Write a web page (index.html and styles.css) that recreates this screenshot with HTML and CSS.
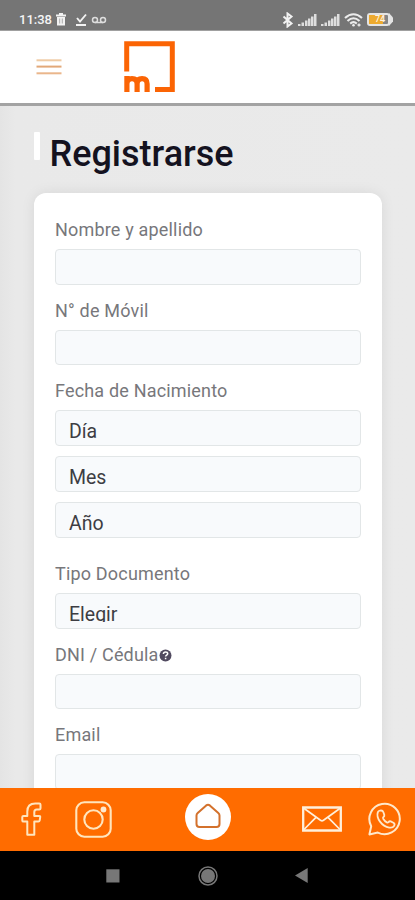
FILE: index.html
```html
<!DOCTYPE html>
<html lang="es">
<head>
<meta charset="utf-8">
<title>Registrarse</title>
<link rel="stylesheet" href="styles.css">
</head>
<body>
<div class="status">
  <span class="time">11:38</span>
  <svg class="trash" width="12" height="14" viewBox="0 0 12 14"><path d="M1 2.500h10M4 1h4" stroke="#f2f2f2" stroke-width="2"/><path d="M2 4h8v8.500h-8z" fill="#f2f2f2"/><path d="M4.700 5.500v5M7.300 5.500v5" stroke="#999" stroke-width=".8"/></svg>
  <svg class="done" width="12" height="14" viewBox="0 0 12 14" fill="none" stroke="#f2f2f2" stroke-width="1.900"><path d="M2 5l3 3.500L11 1.500M1 12h10"/></svg>
  <svg class="voice" width="16" height="8" viewBox="0 0 16 8" fill="none" stroke="#dedede" stroke-width="1.500"><circle cx="4" cy="4" r="2.500"/><circle cx="12" cy="4" r="2.500"/><path d="M4 6.500h8"/></svg>
  <span class="spacer"></span>
  <svg class="bluetooth" width="12" height="16" viewBox="0 0 12 16" fill="none" stroke="#f2f2f2" stroke-width="2"><path d="M1.500 4.500l8 7-4 3V1.500l4 3-8 7"/></svg>
  <svg class="signal" width="19" height="14" viewBox="0 0 19 14" fill="#dedede"><path d="M0 11h2.500v2H0zM3.500 9.500H6V13H3.500zM7 7.500h2.500V13H7zM10 5.500h2.500V13H10zM13 3.500h2.500V13H13zM16 1h2.500v12H16z"/></svg>
  <svg class="signal" width="19" height="14" viewBox="0 0 19 14" fill="#dedede"><path d="M0 11h2.500v2H0zM3.500 9.500H6V13H3.500zM7 7.500h2.500V13H7zM10 5.500h2.500V13H10zM13 3.500h2.500V13H13zM16 1h2.500v12H16z"/></svg>
  <svg class="wifi" width="19" height="16" viewBox="0 0 19 16" fill="none" stroke="#ececec" stroke-width="2.100"><path d="M1 6q8.500-7.500 17 0M3.500 9q6-5.500 12 0M6.200 11.600q3.300-2.800 6.600 0"/><circle cx="9.500" cy="13.300" r="1.300" fill="#ececec" stroke="none"/><path d="M13.500 13h3M15 11.500v3" stroke-width="1.300"/></svg>
  <span class="battery"><span class="charge"></span><span class="level">74</span><svg class="tip" width="4" height="13" viewBox="0 0 4 13"><path d="M0 0l4 4.500v4L0 13z" fill="#e4e4e4"/></svg></span>
</div>
<header class="header">
  <svg class="menu" width="26" height="18" viewBox="0 0 26 18" stroke-width="2"><path d="M.5 2.300h25" stroke="#efcba4"/><path d="M.5 8.600h25" stroke="#e2a878"/><path d="M.5 15.300h25" stroke="#eab68b"/></svg>
  <svg class="logo" width="52" height="52" viewBox="0 0 52 52" fill="none" stroke="#fb6404" stroke-width="5"><path d="M2.700 30.500V2.700h45.600v45.800H31"/><path d="M2.900 51V35M2.900 51v-8q0-5.300 5.100-5.300t5.100 5.300v8M13.100 51v-8q0-5.300 5-5.300t5 5.300v8" stroke-width="5.200"/></svg>
</header>
<main class="content">
  <div class="heading"><span class="marker"></span><h1>Registrarse</h1></div>
  <form class="card">
    <div class="field"><label>Nombre y apellido</label><div class="input"></div></div>
    <div class="field"><label>N° de Móvil</label><div class="input"></div></div>
    <div class="field dates"><label>Fecha de Nacimiento</label><div class="input"><span>Día</span></div><div class="input"><span>Mes</span></div><div class="input"><span>Año</span></div></div>
    <div class="field"><label>Tipo Documento</label><div class="input"><span class="cut">Elegir</span></div></div>
    <div class="field"><label>DNI / Cédula<svg class="help" width="13" height="13" viewBox="0 0 13 13"><circle cx="6.500" cy="6.500" r="6" fill="#514a60"/><path d="M4.400 5q.1-2 2.200-2 2.100 0 2.100 1.700c0 1.500-2.100 1.300-2.100 2.900M6.600 8.700v1.600" fill="none" stroke="#fff" stroke-width="1.500"/></svg></label><div class="input"></div></div>
    <div class="field"><label>Email</label><div class="input"></div></div>
  </form>
</main>
<footer class="tabs">
  <svg class="facebook" width="21" height="35" viewBox="0 0 21 35" fill="none" stroke="#ffe5bd" stroke-width="2" stroke-linejoin="round"><path d="M6.300 32.800V19.600H2.500q-1.200 0-1.200-1.200v-3.300q0-1.200 1.200-1.200h3.800V9.500q0-8 8-8h4q1.200 0 1.200 1.200v3.600q0 1.200-1.200 1.200h-2.500q-2.500 0-2.500 2.500v3.900h4.800q1.300 0 1.100 1.300l-.5 3.200q-.2 1.200-1.400 1.200h-4v13.200z"/></svg>
  <svg class="instagram" width="37" height="37" viewBox="0 0 37 37" fill="none" stroke="#ffe5bd" stroke-width="2.100"><rect x="1.300" y="1.300" width="34.400" height="34.400" rx="8"/><circle cx="18.500" cy="18.500" r="9.200"/><circle cx="28.500" cy="8.500" r="2.900" fill="#ffe9cc" stroke="none"/></svg>
  <span class="home"><svg width="26" height="26" viewBox="0 0 26 26" fill="none" stroke="#d3712c" stroke-width="2" stroke-linejoin="round"><path d="M1.500 12.500q0-1.500 1.200-2.600l8.500-7.500Q13 1 14.800 2.400l8.500 7.500q1.200 1.100 1.200 2.600v8.500q0 3-3 3h-17q-3 0-3-3z"/></svg></span>
  <svg class="mail" width="40" height="26" viewBox="0 0 40 26" fill="none" stroke="#fff0db" stroke-width="2.300"><path d="M1.200 1.500h37.600v23H1.200z"/><path d="M1.500 2l17 12.300q1.500 1 3 0L38.500 2M1.500 24L14 11.300M38.500 24L26 11.300" stroke-width="1.700"/></svg>
  <svg class="whatsapp" width="34" height="34" viewBox="0 0 34 34" fill="none" stroke="#ffe8ca" stroke-width="2" stroke-linejoin="round"><path d="M1.400 32.400l1.800-8.200A15.200 15.200 0 1 1 9.800 30.600z"/><path d="M9.800 10.200q.7-1.300 2-1.500 2.800-.7 3.600 1.600l.9 2.600q.3 1.200-.8 2.100-.8.800-.3 1.700 1.500 2.500 3.700 3.700.9.500 1.600-.3 1-1.200 2.200-.7l2.700 1.300q1.800 1 .8 3-1.400 2.500-5 1.900-5.500-1-9.200-6-3.600-5-2.200-9.400z" stroke-width="1.800"/></svg>
</footer>
<nav class="system">
  <svg class="recent" width="14" height="14" viewBox="0 0 14 14"><path d="M.3.300h13.200v13.200H.3z" fill="#777"/></svg>
  <svg class="circle" width="20" height="20" viewBox="0 0 20 20"><circle cx="10" cy="10" r="9" fill="none" stroke="#777" stroke-width="1.500"/><circle cx="10" cy="10" r="7" fill="#777"/></svg>
  <svg class="back" width="13" height="15" viewBox="0 0 13 15"><path d="M0 7.500L12.700 0v15z" fill="#777"/></svg>
</nav>
</body>
</html>
```
FILE: styles.css
```css
* { box-sizing: border-box; }
body { margin: 0; width: 415px; height: 900px; overflow: hidden; display: flex; flex-direction: column; font-family: Roboto, sans-serif; background: #e9e9e9; }
svg { display: block; flex: none; }
.status { flex: none; height: 31px; padding: 9px 20px 0 19px; display: flex; align-items: center; background: #757575; border-bottom: 1px solid #a0a0a0; color: #f5f5f5; }
.time { width: 33px; font-size: 13px; font-weight: 500; line-height: 20px; white-space: nowrap; }
.trash { margin-left: 3px; }
.done { margin-left: 8px; }
.voice { margin-left: 4px; }
.spacer { flex: 1; }
.bluetooth { margin-right: 4px; }
.signal { margin-right: 4px; }
.wifi { margin-right: 4px; }
.battery { position: relative; width: 23px; height: 13px; margin-right: 5px; border: 2px solid #e4e4e4; border-radius: 3px; display: flex; background: #858585; }
.charge { width: 14px; background: #edaa2f; }
.level { position: absolute; left: 6px; top: 0; font-size: 9px; line-height: 9px; font-weight: 500; color: #fff4de; }
.tip { position: absolute; left: 20px; top: -2px; }
.header { flex: none; height: 75px; display: flex; align-items: flex-start; background: #fff; border-bottom: 3px solid #a3a3a3; }
.menu { margin: 27px 0 0 36px; }
.logo { margin: 10px 0 0 62px; }
.content { height: 682px; flex: none; overflow: hidden; padding: 0 33px 0 34px; background: linear-gradient(90deg, #e4e4e4 0, #e9e9e9 15px, #eaeaea 100%); }
.heading { height: 87px; display: flex; align-items: flex-start; }
.marker { width: 6px; height: 28px; margin-top: 26px; background: #fff; border-radius: 1px; }
h1 { margin: 27px 0 0 9.500px; font-size: 36px; line-height: 42px; font-weight: 500; color: #14121f; }
.card { height: 640px; padding: 26px 21px; border-radius: 12px; background: #fff; box-shadow: 0 0 14px rgba(0,0,0,.08); }
.field { height: 80.500px; }
.field.dates { height: 183.200px; }
label { height: 30px; display: flex; align-items: flex-start; font-size: 18px; line-height: 21px; letter-spacing: .18px; color: #77777b; white-space: nowrap; }
.help { margin-top: 5px; }
.input { height: 35.500px; padding: 9.500px 13px 0; border: 1px solid #e2e6e7; border-radius: 4px; background: #f8fafc; font-size: 19.500px; line-height: 22px; color: #3d3d43; }
.input + .input { margin-top: 10.500px; }
.input span { display: block; }
.input .cut { height: 18px; overflow: hidden; }
.tabs { flex: none; height: 63px; display: flex; align-items: flex-start; background: #ff6c00; }
.facebook { margin: 14px 0 0 21px; }
.instagram { margin: 13px 0 0 33px; }
.home { width: 46px; height: 46px; margin: 6px 0 0 73px; border-radius: 50%; background: #fff; display: flex; justify-content: center; padding-top: 9px; }
.mail { margin: 18px 0 0 71px; }
.whatsapp { margin: 14px 0 0 26px; }
.system { flex: none; height: 49px; display: flex; align-items: center; background: #000; }
.recent { margin-left: 106px; }
.circle { margin-left: 78px; }
.back { margin-left: 77px; }
```
